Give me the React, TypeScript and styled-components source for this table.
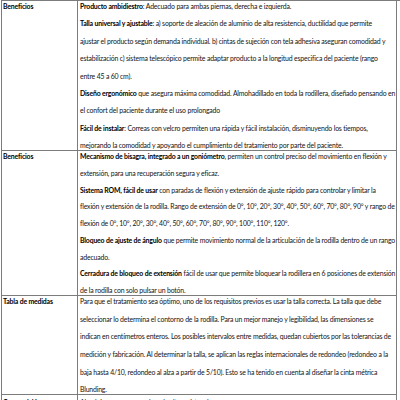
import React from 'react';
import styled, { createGlobalStyle } from 'styled-components';

const GlobalStyle = createGlobalStyle`
  html, body {
    margin: 0;
    padding: 0;
    background: #ffffff;
  }
  body {
    font-family: Lato, 'Open Sans', sans-serif;
    color: #141414;
  }
`;

const Sheet = styled.div`
  display: grid;
  grid-template-columns: 76px 319px;
  margin-left: 1px;
  border-top: 1px solid #7c7c7c;
  border-left: 1px solid #7c7c7c;
  font-size: 6.9px;
  letter-spacing: -0.17px;
`;

const LabelCell = styled.div<{ $top: number }>`
  border-right: 1px solid #7c7c7c;
  border-bottom: 1px solid #7c7c7c;
  padding: ${(p) => p.$top}px 0 0 1px;
  font-weight: 700;
  line-height: 10px;
  white-space: nowrap;
  color: #000000;
`;

const TextCell = styled.div<{ $gap: number; $top: number }>`
  display: flex;
  flex-direction: column;
  gap: ${(p) => p.$gap}px;
  border-right: 1px solid #7c7c7c;
  border-bottom: 1px solid #7c7c7c;
  padding: ${(p) => p.$top}px 0 0 2px;
  overflow: hidden;
`;

const Line = styled.div`
  height: 10px;
  line-height: 10px;
  white-space: nowrap;
`;

const Strong = styled.b`
  font-weight: 700;
  color: #000000;
`;

type Segment = string | { b: string };
type Row = { label: string; gap: number; top: number; lines: Segment[][] };

const rows: Row[] = [
  {
    label: 'Beneficios',
    gap: 7.4,
    top: 0,
    lines: [
      [{ b: 'Producto ambidiestro' }, ': Adecuado para ambas piernas, derecha e izquierda.'],
      [{ b: 'Talla universal y ajustable' }, ':  a) soporte de aleación de aluminio de alta resistencia, ductilidad  que permite'],
      ['ajustar el producto según demanda individual. b) cintas de sujeción con tela adhesiva aseguran comodidad y'],
      ['estabilización c) sistema telescópico permite adaptar producto a la longitud especifica del paciente (rango'],
      ['entre 45 a 60 cm).'],
      [{ b: 'Diseño ergonómico' }, ' que asegura máxima comodidad. Almohadillado en toda la rodillera, diseñado pensando en'],
      ['el confort del paciente durante el uso prolongado'],
      [{ b: 'Fácil de instalar' }, ': Correas con velcro permiten una rápida y fácil instalación, disminuyendo los tiempos,'],
      ['mejorando la comodidad y apoyando el  cumplimiento del tratamiento por parte del paciente.'],
    ],
  },
  {
    label: 'Beneficios',
    gap: 6.75,
    top: 0,
    lines: [
      [{ b: 'Mecanismo de bisagra, integrado a un goniómetro' }, ', permiten un control preciso del movimiento en flexión y'],
      ['extensión, para una recuperación segura y eficaz.'],
      [{ b: 'Sistema ROM, fácil de usar' }, ' con paradas de flexión y extensión de ajuste rápido para controlar y limitar la'],
      ['flexión y extensión de la rodilla. Rango de extensión de 0°, 10°, 20°, 30°, 40°, 50°, 60°, 70°, 80°, 90° y rango de'],
      ['flexión de 0°, 10°, 20°, 30°, 40°, 50°, 60°, 70°, 80°, 90°, 100°, 110°, 120°.'],
      [{ b: 'Bloqueo de ajuste de ángulo' }, ' que permite movimiento normal de la articulación de la rodilla dentro de un rango'],
      ['adecuado.'],
      [{ b: 'Cerradura de bloqueo de extensión' }, ' fácil de usar que permite bloquear la rodillera en 6 posiciones de extensión'],
      ['de la rodilla con solo pulsar un botón.'],
    ],
  },
  {
    label: 'Tabla de medidas',
    gap: 7.6,
    top: 0,
    lines: [
      ['Para que el tratamiento sea óptimo, uno de los requisitos previos es usar la talla correcta. La talla que debe'],
      ['seleccionar lo determina el contorno de la rodilla. Para un mejor manejo y legibilidad, las dimensiones se'],
      ['indican en centímetros enteros. Los posibles intervalos entre medidas, quedan cubiertos por las tolerancias de'],
      ['medición y fabricación. Al determinar la talla, se aplican las reglas internacionales de redondeo (redondeo a la'],
      ['baja hasta 4/10, redondeo al alza a partir de 5/10). Esto se ha tenido en cuenta al diseñar la cinta métrica'],
      ['Blunding.'],
    ],
  },
  {
    label: 'Composición',
    gap: 7.4,
    top: 2,
    lines: [['Aluminio, neopreno y velcro de alta resistencia.']],
  },
];

export default function App() {
  return (
    <>
      <GlobalStyle />
      <Sheet>
        {rows.map((row, i) => (
          <React.Fragment key={i}>
            <LabelCell $top={row.top}>{row.label}</LabelCell>
            <TextCell $gap={row.gap} $top={row.top}>
              {row.lines.map((segs, j) => (
                <Line key={j}>
                  {segs.map((s, k) =>
                    typeof s === 'string' ? <span key={k}>{s}</span> : <Strong key={k}>{s.b}</Strong>
                  )}
                </Line>
              ))}
            </TextCell>
          </React.Fragment>
        ))}
      </Sheet>
    </>
  );
}
